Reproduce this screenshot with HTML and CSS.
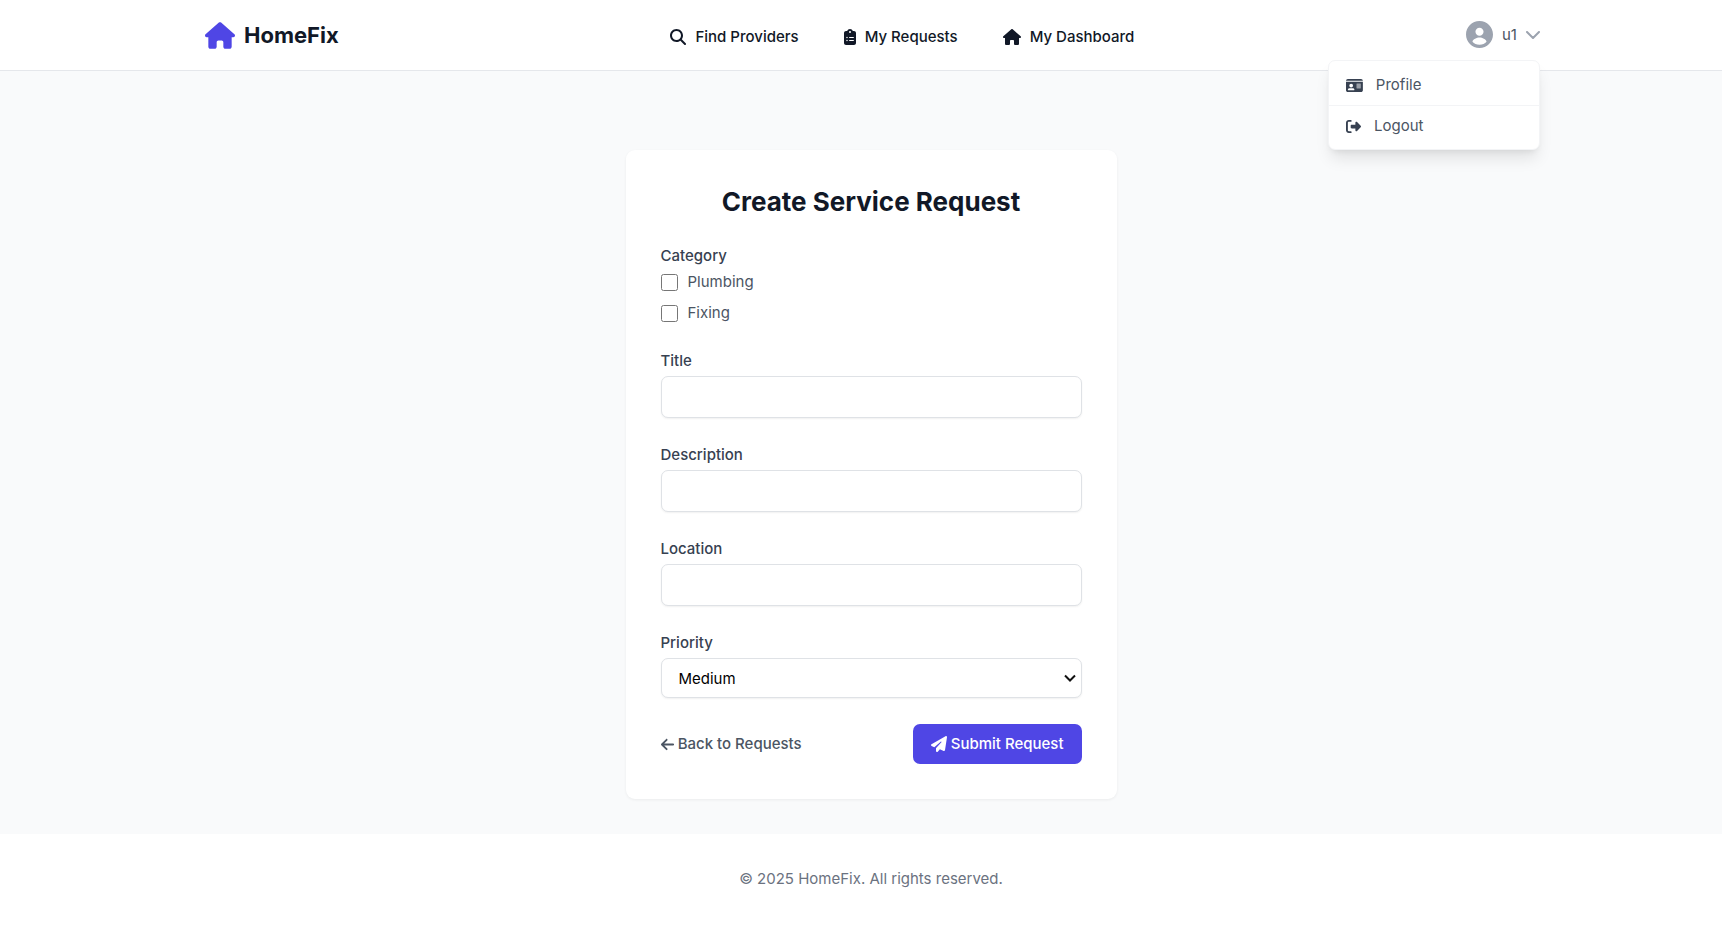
FILE: index.html
```html
<!DOCTYPE html>
<html lang="en">
<head>
<meta charset="utf-8">
<meta name="viewport" content="width=device-width, initial-scale=1">
<title>HomeFix</title>
<link rel="stylesheet" href="styles.css">
</head>
<body>
<header class="header">
  <div class="header-inner">
    <a class="brand" href="#">
      <svg class="brand-icon" viewBox="0 0 576 512" aria-hidden="true"><path d="M575.8 255.5c0 18-15 32.1-32 32.1h-32l.7 160.2c0 2.7-.2 5.4-.5 8.1V472c0 22.1-17.9 40-40 40H392c-22.1 0-40-17.9-40-40V384c0-17.700-14.300-32-32-32H256c-17.700 0-32 14.300-32 32v88c0 22.100-17.900 40-40 40H104c-22.100 0-40-17.900-40-40V287.600H32c-18 0-32-14-32-32.100c0-9 3-17 10-24L266.400 8c7-7 15-8 22-8s15 2 21 7L564.800 231.500c8 7 12 15 11 24z"/></svg>
      HomeFix
    </a>
    <nav class="nav">
      <a class="nav-link" href="#"><svg class="icon" viewBox="0 0 512 512" aria-hidden="true"><path d="M416 208c0 45.900-14.900 88.300-40 122.700L502.600 457.400c12.500 12.500 12.500 32.800 0 45.300s-32.800 12.500-45.300 0L330.700 376c-34.400 25.200-76.800 40-122.700 40C93.100 416 0 322.900 0 208S93.100 0 208 0S416 93.100 416 208zM208 352a144 144 0 1 0 0-288 144 144 0 1 0 0 288z"/></svg>Find Providers</a>
      <a class="nav-link" href="#"><svg class="icon" viewBox="0 0 384 512" aria-hidden="true"><path d="M192 0c-41.800 0-77.400 26.700-90.500 64H64C28.700 64 0 92.700 0 128V448c0 35.300 28.700 64 64 64H320c35.300 0 64-28.700 64-64V128c0-35.300-28.700-64-64-64H282.500C269.400 26.700 233.800 0 192 0zm0 64a32 32 0 1 1 0 64 32 32 0 1 1 0-64zM72 272a24 24 0 1 1 48 0 24 24 0 1 1 -48 0zm104-16H304c8.800 0 16 7.200 16 16s-7.200 16-16 16H176c-8.800 0-16-7.200-16-16s7.200-16 16-16zM72 368a24 24 0 1 1 48 0 24 24 0 1 1 -48 0zm88 0c0-8.800 7.200-16 16-16H304c8.800 0 16 7.200 16 16s-7.200 16-16 16H176c-8.800 0-16-7.200-16-16z" fill-rule="evenodd"/></svg>My Requests</a>
      <a class="nav-link" href="#"><svg class="icon" viewBox="0 0 576 512" aria-hidden="true"><path d="M575.8 255.5c0 18-15 32.1-32 32.1h-32l.7 160.2c0 2.7-.2 5.4-.5 8.1V472c0 22.1-17.9 40-40 40H392c-22.1 0-40-17.9-40-40V384c0-17.700-14.300-32-32-32H256c-17.700 0-32 14.300-32 32v88c0 22.100-17.900 40-40 40H104c-22.100 0-40-17.900-40-40V287.600H32c-18 0-32-14-32-32.100c0-9 3-17 10-24L266.400 8c7-7 15-8 22-8s15 2 21 7L564.800 231.500c8 7 12 15 11 24z"/></svg>My Dashboard</a>
    </nav>
    <div class="account">
      <button class="account-button" type="button" aria-expanded="true">
        <svg class="avatar" viewBox="2 2 20 20" aria-hidden="true"><path d="M12 2C6.480 2 2 6.480 2 12s4.480 10 10 10 10-4.480 10-10S17.520 2 12 2zm0 5c1.660 0 3 1.340 3 3s-1.340 3-3 3-3-1.340-3-3 1.340-3 3-3zm0 12.500c-2.200 0-4-.8-5.200-2.200.2-1.800 3.200-3.100 5.200-3.100s5 1.300 5.200 3.100c-1.200 1.400-3 2.200-5.200 2.200z"/></svg>
        u1
        <svg class="chevron" viewBox="0 0 14 8" aria-hidden="true"><path d="M1 1l6 6 6-6"/></svg>
      </button>
      <div class="menu">
        <a class="menu-item" href="#"><svg class="icon" viewBox="0 0 576 512" aria-hidden="true"><path fill-rule="evenodd" d="M0 96H576c0-35.300-28.700-64-64-64H64C28.700 32 0 60.700 0 96zM0 128V416c0 35.300 28.700 64 64 64H512c35.300 0 64-28.700 64-64V128H0zM64 405.300c0-29.500 23.900-53.300 53.300-53.300H234.700c29.500 0 53.300 23.900 53.300 53.300c0 5.900-4.800 10.700-10.700 10.700H74.700c-5.900 0-10.700-4.800-10.700-10.700zM176 192a64 64 0 1 1 0 128 64 64 0 1 1 0-128zM352 208c0-8.800 7.200-16 16-16H496c8.800 0 16 7.200 16 16s-7.200 16-16 16H368c-8.800 0-16-7.200-16-16zM352 272c0-8.800 7.200-16 16-16H496c8.800 0 16 7.200 16 16s-7.200 16-16 16H368c-8.800 0-16-7.200-16-16zM352 336c0-8.800 7.200-16 16-16H496c8.800 0 16 7.200 16 16s-7.200 16-16 16H368c-8.800 0-16-7.200-16-16z"/></svg>Profile</a>
        <a class="menu-item" href="#"><svg class="icon" viewBox="0 0 512 512" aria-hidden="true"><path d="M377.900 105.900L500.700 228.700c7.200 7.200 11.300 17.100 11.300 27.300s-4.100 20.100-11.300 27.300L377.900 406.100c-6.400 6.400-15 9.900-24 9.900c-18.700 0-33.900-15.200-33.900-33.900l0-62.100-128 0c-17.700 0-32-14.300-32-32l0-64c0-17.700 14.300-32 32-32l128 0 0-62.100c0-18.700 15.200-33.900 33.900-33.900c9 0 17.600 3.600 24 9.900zM160 96L96 96c-17.700 0-32 14.300-32 32l0 256c0 17.700 14.300 32 32 32l64 0c17.700 0 32 14.300 32 32s-14.300 32-32 32l-64 0c-53 0-96-43-96-96L0 128C0 75 43 32 96 32l64 0c17.700 0 32 14.300 32 32s-14.300 32-32 32z"/></svg>Logout</a>
      </div>
    </div>
  </div>
</header>
<main class="main">
  <form class="card">
    <h1 class="title">Create Service Request</h1>
    <fieldset class="field">
      <legend class="label">Category</legend>
      <div class="checks">
        <label class="check"><input class="checkbox" type="checkbox" name="category">Plumbing</label>
        <label class="check"><input class="checkbox" type="checkbox" name="category">Fixing</label>
      </div>
    </fieldset>
    <div class="field">
      <label class="label" for="title">Title</label>
      <input class="control" id="title" type="text">
    </div>
    <div class="field">
      <label class="label" for="description">Description</label>
      <input class="control" id="description" type="text">
    </div>
    <div class="field">
      <label class="label" for="location">Location</label>
      <input class="control" id="location" type="text">
    </div>
    <div class="field">
      <label class="label" for="priority">Priority</label>
      <select class="control select" id="priority">
        <option>Low</option>
        <option selected>Medium</option>
        <option>High</option>
      </select>
    </div>
    <div class="actions">
      <a class="back" href="#"><svg class="icon" viewBox="0 0 448 512" aria-hidden="true"><path d="M9.400 233.400c-12.500 12.500-12.500 32.800 0 45.300l160 160c12.500 12.500 32.800 12.500 45.300 0s12.500-32.800 0-45.300L109.200 288 416 288c17.700 0 32-14.300 32-32s-14.300-32-32-32l-306.700 0L214.600 118.600c12.500-12.500 12.500-32.800 0-45.300s-32.800-12.500-45.300 0l-160 160z"/></svg>Back to Requests</a>
      <button class="submit" type="submit"><svg class="icon" viewBox="0 0 512 512" aria-hidden="true"><path d="M498.100 5.600c10.100 7 15.400 19.100 13.500 31.200l-64 416c-1.500 9.700-7.400 18.200-16 23s-18.900 5.400-28 1.600L284 427.700l-68.500 74.100c-8.900 9.700-22.900 12.900-35.200 8.100S160 493.200 160 480V396.400c0-4 1.500-7.800 4.200-10.700L331.800 202.800c5.800-6.300 5.600-16-.4-22s-15.700-6.400-22-.7L106 360.800 17.700 316.600C7.100 311.300 .3 300.700 0 288.900s5.900-22.800 16.100-28.700l448-256c10.700-6.100 23.900-5.500 34 1.400z"/></svg>Submit Request</button>
    </div>
  </form>
</main>
<footer class="footer">© 2025 HomeFix. All rights reserved.</footer>
</body>
</html>
```

FILE: styles.css
```css
*, *::before, *::after {
  box-sizing: border-box;
}

:root {
  --gutter-start: 20px;
}

body {
  margin: 0;
  min-height: 100vh;
  background: #fff;
  color: #111827;
  font-family: Inter, "Liberation Sans", sans-serif;
  font-size: 15px;
  line-height: 22px;
}

a {
  color: inherit;
  text-decoration: none;
}

.icon {
  height: 15px;
  flex: none;
  fill: currentColor;
}

.header {
  padding-left: var(--gutter-start);
  background: #fff;
  border-bottom: 1px solid #e5e7eb;
  box-shadow: 0 1px 2px rgba(0, 0, 0, 0.05);
}

.header-inner {
  display: flex;
  align-items: center;
  justify-content: space-between;
  max-width: 1408px;
  height: 70px;
  margin: 0 auto;
  padding: 0 35px;
}

.brand {
  display: flex;
  align-items: center;
  gap: 9px;
  padding-left: 3px;
  font-size: 22px;
  font-weight: 700;
  line-height: 31px;
}

.brand-icon {
  width: 30px;
  height: 27px;
  fill: #4f46e5;
}

.nav {
  display: flex;
  gap: 45px;
  padding-top: 4px;
  font-weight: 500;
}

.nav-link {
  display: flex;
  align-items: center;
  gap: 9px;
}

.nav .icon {
  height: 16px;
}

.account {
  position: relative;
}

.account-button {
  display: flex;
  align-items: center;
  gap: 9px;
  padding: 0 0 1px;
  border: 0;
  background: none;
  color: #4b5563;
  font: inherit;
}

.avatar {
  width: 27px;
  height: 27px;
  fill: #9ca3af;
}

.chevron {
  width: 14px;
  height: 8px;
  fill: none;
  stroke: #9ca3af;
  stroke-width: 2;
  stroke-linecap: round;
  stroke-linejoin: round;
}

.menu {
  position: absolute;
  top: 100%;
  right: 0;
  width: 212px;
  margin-top: 11px;
  border: 1px solid #f3f4f6;
  border-radius: 7px;
  background: #fff;
  color: #4b5563;
  box-shadow: 0 11px 16px -3px rgba(0, 0, 0, 0.1), 0 4px 7px -4px rgba(0, 0, 0, 0.1);
}

.menu-item {
  display: flex;
  align-items: center;
  gap: 13px;
  padding: 13px 17px 9px;
}

.menu-item .icon {
  fill: #374151;
}

.menu-item + .menu-item {
  padding: 9px 17px 12px;
  border-top: 1px solid #f3f4f6;
}

.main {
  padding: 79px 0 35px var(--gutter-start);
  background: #f9fafb;
}

.card {
  display: flex;
  flex-direction: column;
  gap: 26px;
  max-width: 491px;
  margin: 0 auto;
  padding: 34px 35px 35px;
  border-radius: 9px;
  background: #fff;
  box-shadow: 0 1px 3px rgba(0, 0, 0, 0.06);
}

.title {
  margin: 0;
  font-size: 26px;
  font-weight: 700;
  line-height: 35px;
  text-align: center;
}

.field {
  display: flex;
  flex-direction: column;
  gap: 4px;
  min-width: 0;
  margin: 0;
  padding: 0;
  border: 0;
}

.label {
  padding: 0;
  color: #374151;
  font-weight: 500;
}

.checks {
  display: flex;
  flex-direction: column;
  gap: 9px;
  padding-top: 4px;
}

.check {
  display: flex;
  align-items: center;
  gap: 10px;
  color: #4b5563;
}

.checkbox {
  width: 17px;
  height: 17px;
  margin: 0;
}

.control {
  width: 100%;
  height: 42px;
  padding: 9px 17px;
  border: 1px solid #dfe2e6;
  border-radius: 7px;
  background: #fff;
  color: #000;
  font: inherit;
  box-shadow: 0 1px 2px rgba(0, 0, 0, 0.06);
}

.select {
  height: 40px;
  appearance: none;
  background: #fff url("data:image/svg+xml,%3Csvg xmlns='http://www.w3.org/2000/svg' viewBox='0 0 12 8'%3E%3Cpath d='M1 1.500l5 5 5-5' fill='none' stroke='%23111' stroke-width='2'/%3E%3C/svg%3E") no-repeat right 5px center / 12px 8px;
}

.actions {
  display: flex;
  align-items: center;
  justify-content: space-between;
}

.back {
  display: flex;
  align-items: center;
  gap: 4px;
  color: #4b5563;
  font-weight: 500;
}

.submit {
  display: flex;
  align-items: center;
  gap: 4px;
  padding: 9px 18px;
  border: 0;
  border-radius: 7px;
  background: #4f46e5;
  color: #fff;
  font: inherit;
  font-weight: 500;
}

.submit .icon {
  height: 16px;
}

.footer {
  padding: 34px 0 35px var(--gutter-start);
  color: #6b7280;
  text-align: center;
}
```
